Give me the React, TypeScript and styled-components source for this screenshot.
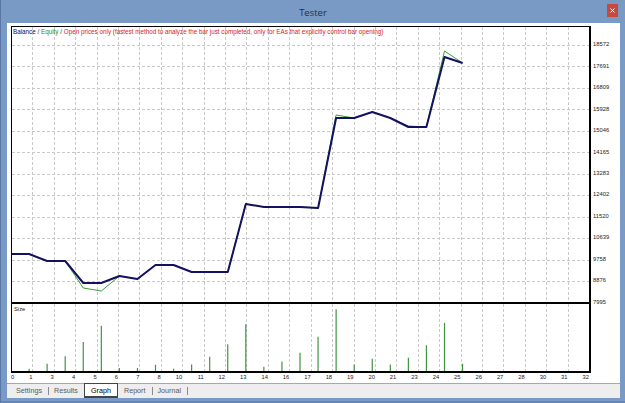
import React from 'react';
import styled, { createGlobalStyle } from 'styled-components';

const GlobalStyle = createGlobalStyle`
  html, body {
    margin: 0;
    padding: 0;
    background: #7a9ac6;
  }
  body {
    font-family: 'Liberation Sans', Arial, sans-serif;
  }
`;

// chart geometry (inner plot area)
const PLOT_W = 577;
const MAIN_H = 275;
const SIZE_H = 67;
const COL = 578 / 27;
const UNIT = 578 / 32;
const ROW = 21.46;
const MIN_V = 7995;
const STEP_V = 881.4167;

const yLabels = [18572, 17691, 16809, 15928, 15046, 14165, 13283, 12402, 11520, 10639, 9758, 8876, 7995];
const xLabels = [0, 1, 3, 4, 5, 6, 7, 8, 10, 11, 12, 13, 14, 16, 17, 18, 19, 20, 21, 23, 24, 25, 26, 27, 28, 30, 31, 32];

const balance = [9987, 9987, 9699, 9699, 8796, 8796, 9083, 8960, 9535, 9535, 9248, 9248, 9248, 12040, 11917, 11917, 11917, 11876, 15572, 15572, 15819, 15572, 15203, 15203, 18078, 17831];
const equity = [9987, 9987, 9699, 9699, 8590, 8467, 9083, 8960, 9535, 9535, 9248, 9248, 9248, 12040, 11917, 11917, 11917, 11876, 15696, 15572, 15819, 15572, 15245, 15203, 18324, 17831];
const lots = [0, 0.1, 0.25, 0.48, 0.91, 1.4, 0.12, 0.12, 0.22, 0.1, 0.23, 0.46, 0.84, 1.45, 0.16, 0.32, 0.58, 1.07, 1.9, 0.23, 0.4, 0.23, 0.43, 0.81, 1.49, 0.25];

const xOf = (n: number) => n * UNIT - 1;
const yOf = (v: number) => MAIN_H + 0.5 - ((v - MIN_V) / STEP_V) * ROW;
const toPoints = (vals: number[]) => vals.map((v, i) => `${xOf(i).toFixed(1)},${yOf(v).toFixed(1)}`).join(' ');

const Window = styled.div`
  width: 625px;
  height: 403px;
  box-sizing: border-box;
  display: flex;
  flex-direction: column;
  background: #7a9ac6;
  border-left: 1px solid #5877a6;
  border-bottom: 2px solid #6686b8;
  overflow: hidden;
`;

const TitleBar = styled.div`
  height: 23px;
  flex-shrink: 0;
  display: grid;
  grid-template-columns: 1fr auto 1fr;
  align-items: center;
`;

const Title = styled.div`
  grid-column: 2;
  font-family: 'Open Sans', 'Liberation Sans', sans-serif;
  font-size: 9.5px;
  color: #26303c;
  padding-top: 1px;
`;

const CloseButton = styled.div`
  grid-column: 3;
  justify-self: end;
  align-self: start;
  margin: 4px 7px 0 0;
  width: 11px;
  height: 13px;
  background: #c9483e;
  display: flex;
  align-items: center;
  justify-content: center;
`;

const Panel = styled.div`
  flex: 1;
  margin: 0 5px 3px 6px;
  background: #ffffff;
  display: flex;
  flex-direction: column;
`;

const ChartRow = styled.div`
  display: flex;
  align-items: flex-start;
  padding: 3px 0 0 4px;
`;

const ChartBox = styled.div`
  width: 580px;
  box-sizing: border-box;
  border-style: solid;
  border-color: #000;
  border-width: 1px 2px 2px 1px;
  display: flex;
  flex-direction: column;
`;

const Pane = styled.div<{ $h: number }>`
  position: relative;
  height: ${(p) => p.$h}px;
  svg {
    display: block;
  }
`;

const Divider = styled.div`
  height: 2px;
  background: #000;
`;

const Legend = styled.div`
  position: absolute;
  left: 1px;
  top: 1px;
  font-size: 6.3px;
  line-height: 8px;
  white-space: nowrap;
  color: #333;
`;

const LegendPart = styled.span<{ $color: string }>`
  color: ${(p) => p.$color};
`;

const PaneLabel = styled.div`
  position: absolute;
  left: 2px;
  top: 2px;
  font-size: 5.8px;
  line-height: 7px;
  color: #222;
`;

const YAxis = styled.div`
  display: flex;
  flex-direction: column;
  padding: 8.27px 0 0 2px;
`;

const YLabel = styled.div`
  height: ${ROW}px;
  line-height: ${ROW}px;
  font-size: 5.8px;
  color: #222;
`;

const XAxis = styled.div`
  display: flex;
  height: 10px;
  padding-left: 4px;
`;

const XTick = styled.div<{ $first?: boolean }>`
  width: ${COL}px;
  flex-shrink: 0;
  display: flex;
  justify-content: ${(p) => (p.$first ? 'space-between' : 'flex-end')};
  font-size: 5.8px;
  line-height: 9px;
  color: #222;
`;

const TabStrip = styled.div`
  flex: 1;
  display: flex;
  align-items: stretch;
  padding-left: 3px;
  background: #eeeeee;
  border-top: 1px solid #a8a8a8;
`;

const Tab = styled.div<{ $active?: boolean; $sep?: boolean }>`
  position: relative;
  height: 12px;
  display: flex;
  align-items: center;
  padding: 0 6px;
  font-size: 7.2px;
  color: ${(p) => (p.$active ? '#000' : '#5a5a5a')};
  background: ${(p) => (p.$active ? '#fff' : 'transparent')};
  ${(p) =>
    p.$active &&
    `
    margin-top: -1px;
    height: 12px;
    border: 1px solid #444;
    border-bottom-width: 2px;
  `}
  ${(p) =>
    p.$sep &&
    `
    &::after {
      content: '';
      position: absolute;
      right: -1px;
      top: 3px;
      width: 1px;
      height: 8px;
      background: #8a8a8a;
    }
  `}
`;

const tabs = [
  { name: 'Settings', sep: true },
  { name: 'Results', sep: false },
  { name: 'Graph', active: true },
  { name: 'Report', sep: true },
  { name: 'Journal', sep: true },
];

const Grid: React.FC<{ h: number; rows: boolean }> = ({ h, rows }) => (
  <g stroke="#c9c9c9" strokeWidth={1} strokeDasharray="3 2" shapeRendering="crispEdges">
    {Array.from({ length: 26 }, (_, i) => {
      const x = Math.round((i + 1) * COL - 1) + 0.5;
      return <line key={`v${i}`} x1={x} y1={0} x2={x} y2={h} />;
    })}
    {rows &&
      Array.from({ length: 12 }, (_, j) => {
        const y = Math.round(MAIN_H + 0.5 - (j + 1) * ROW) + 0.5;
        return <line key={`h${j}`} x1={0} y1={y} x2={PLOT_W} y2={y} />;
      })}
  </g>
);

const App: React.FC = () => {
  return (
    <>
      <GlobalStyle />
      <Window>
        <TitleBar>
          <Title>Tester</Title>
          <CloseButton>
            <svg width="5" height="5" viewBox="0 0 5 5">
              <path d="M0.5 0.5 L4.5 4.5 M4.5 0.5 L0.5 4.5" stroke="#fff" strokeWidth="1" />
            </svg>
          </CloseButton>
        </TitleBar>
        <Panel>
          <ChartRow>
            <ChartBox>
              <Pane $h={MAIN_H}>
                <svg width={PLOT_W} height={MAIN_H}>
                  <Grid h={MAIN_H} rows />
                  <polyline points={toPoints(equity)} fill="none" stroke="#3d9a3d" strokeWidth={1} />
                  <polyline points={toPoints(balance)} fill="none" stroke="#12125e" strokeWidth={2} strokeLinejoin="round" />
                </svg>
                <Legend>
                  <LegendPart $color="#0c0c66">Balance</LegendPart> /{' '}
                  <LegendPart $color="#1f8f1f">Equity</LegendPart> /{' '}
                  <LegendPart $color="#d8231b">
                    Open prices only (fastest method to analyze the bar just completed, only for EAs that explicitly control bar opening)
                  </LegendPart>
                </Legend>
              </Pane>
              <Divider />
              <Pane $h={SIZE_H}>
                <svg width={PLOT_W} height={SIZE_H}>
                  <Grid h={SIZE_H} rows={false} />
                  {lots.map((l, i) =>
                    l > 0 ? (
                      <line
                        key={i}
                        x1={xOf(i)}
                        x2={xOf(i)}
                        y1={SIZE_H}
                        y2={SIZE_H + 1 - l * 33}
                        stroke="#3f943f"
                        strokeWidth={1.2}
                      />
                    ) : null
                  )}
                </svg>
                <PaneLabel>Size</PaneLabel>
              </Pane>
            </ChartBox>
            <YAxis>
              {yLabels.map((v) => (
                <YLabel key={v}>{v}</YLabel>
              ))}
            </YAxis>
          </ChartRow>
          <XAxis>
            {xLabels.slice(1).map((l, i) => (
              <XTick key={l} $first={i === 0}>
                {i === 0 && <span>0</span>}
                <span>{l}</span>
              </XTick>
            ))}
          </XAxis>
          <TabStrip>
            {tabs.map((t) => (
              <Tab key={t.name} $active={t.active} $sep={t.sep}>
                {t.name}
              </Tab>
            ))}
          </TabStrip>
        </Panel>
      </Window>
    </>
  );
};

export default App;
